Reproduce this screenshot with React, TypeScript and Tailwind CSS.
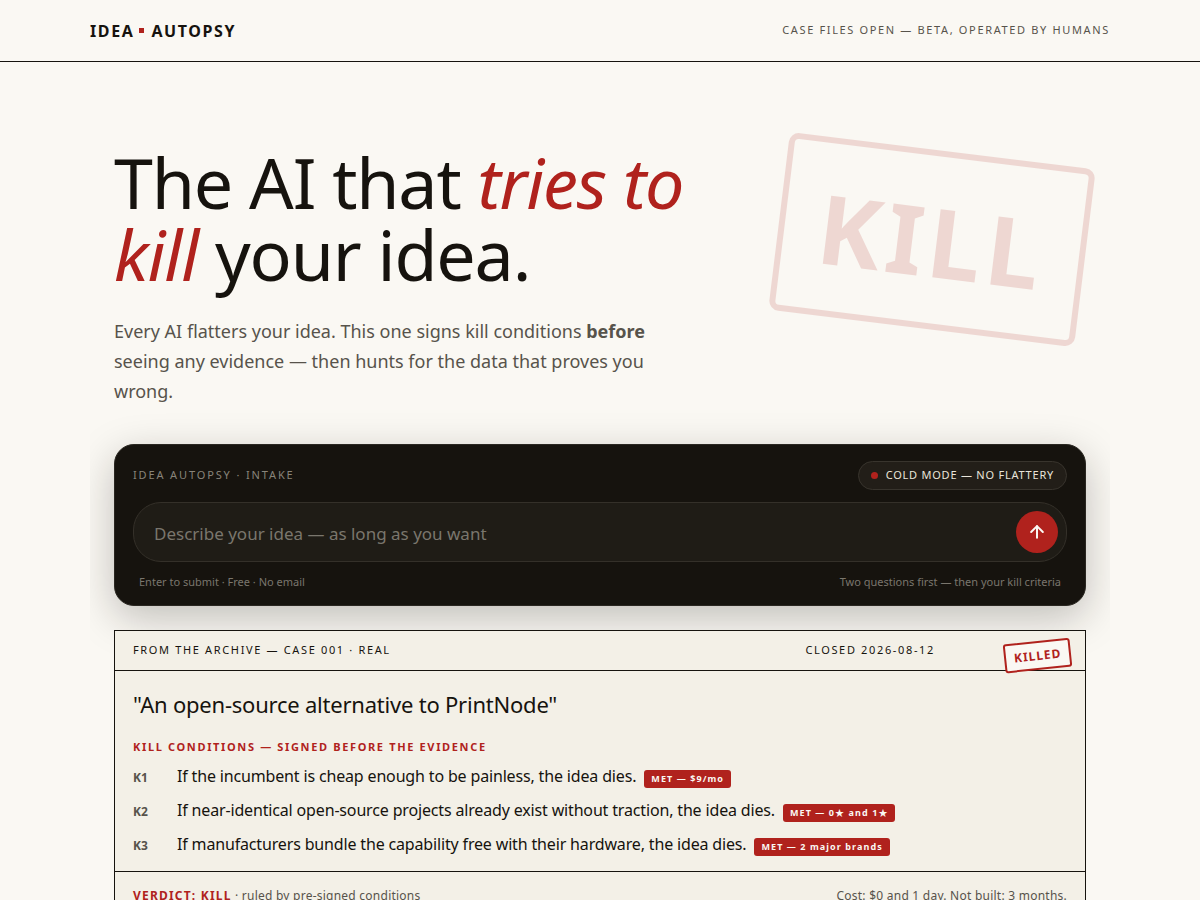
import { ArrowUp } from 'lucide-react'

interface Condition {
  id: string
  text: string
  met: string
}

const CONDITIONS: Condition[] = [
  { id: 'K1', text: 'If the incumbent is cheap enough to be painless, the idea dies.', met: 'MET — $9/mo' },
  { id: 'K2', text: 'If near-identical open-source projects already exist without traction, the idea dies.', met: 'MET — 0★ and 1★' },
  { id: 'K3', text: 'If manufacturers bundle the capability free with their hardware, the idea dies.', met: 'MET — 2 major brands' },
]

function Header() {
  return (
    <header className="border-b border-[#16130e]">
      <div className="mx-auto flex h-[61px] max-w-[1020px] items-center justify-between">
        <a href="#" className="flex items-center text-[16px] leading-5 font-bold tracking-[0.1em]">
          IDEA
          <span className="mr-[7px] ml-[5px] size-[5px] bg-[#b0221d]"></span>
          AUTOPSY
        </a>
        <span className="text-[11px] tracking-[0.15em] text-[#57534b]">CASE FILES OPEN — BETA, OPERATED BY HUMANS</span>
      </div>
    </header>
  )
}

function Intake() {
  return (
    <form
      onSubmit={(e) => e.preventDefault()}
      className="rounded-[20px] border border-[#2a2721] bg-[#16130e] px-[18px] pt-4 pb-[15px] shadow-[0_12px_40px_rgba(22,19,14,0.25)]"
    >
      <div className="flex items-center justify-between">
        <label htmlFor="idea" className="text-[11px] tracking-[0.17em] text-[#88847a]">IDEA AUTOPSY · INTAKE</label>
        <button type="button" className="flex h-[29px] items-center gap-2 rounded-full border border-[#38342d] bg-[#221e18] px-3 text-[11px] tracking-[0.07em] text-[#e9e5da]">
          <span className="size-[7px] rounded-full bg-[#b0221d]"></span>
          COLD MODE — NO FLATTERY
        </button>
      </div>

      <div className="mt-3 flex h-[60px] items-center rounded-[28px] border border-[#343029] bg-[#1f1c16] pr-2 pl-5">
        <input
          id="idea"
          type="text"
          placeholder="Describe your idea — as long as you want"
          className="min-w-0 flex-1 bg-transparent pt-1 text-[17px] text-[#f3f0e7] outline-none placeholder:text-[#7a766d]"
        />
        <button type="submit" aria-label="Submit idea" className="flex size-[42px] items-center justify-center rounded-full bg-[#b0221d] text-[#faf8f3]">
          <ArrowUp size={20} strokeWidth={2.4} />
        </button>
      </div>

      <div className="mt-3 flex justify-between px-1.5 text-[11px] leading-4 text-[#7a766d]">
        <span>Enter to submit · Free · No email</span>
        <span>Two questions first — then your kill criteria</span>
      </div>
    </form>
  )
}

function CaseFile() {
  return (
    <article className="relative mt-6 border border-[#16130e] bg-[#f3f0e7]">
      <div className="flex h-10 items-center justify-between border-b border-[#16130e] pr-[150px] pl-[18px] text-[11px] tracking-[0.15em]">
        <span>FROM THE ARCHIVE — CASE 001 · REAL</span>
        <span>CLOSED 2026-08-12</span>
      </div>
      <span className="absolute top-[10px] right-[14px] flex h-[29px] -rotate-6 items-center rounded-[3px] border-2 border-[#b0221d] bg-[#faf8f3] px-2 text-[12px] font-bold tracking-[0.08em] text-[#b0221d]">
        KILLED
      </span>

      <div className="px-[18px] pt-[17px] pb-[14px]">
        <h2 className="text-[22px] leading-8 tracking-[-0.01em]">"An open-source alternative to PrintNode"</h2>
        <h3 className="mt-[17px] text-[11px] leading-5 font-bold tracking-[0.15em] text-[#b0221d]">
          KILL CONDITIONS — SIGNED BEFORE THE EVIDENCE
        </h3>
        <ul className="mt-1.5 flex flex-col gap-2">
          {CONDITIONS.map((c) => (
            <li key={c.id} className="flex items-baseline">
              <span className="w-11 text-[12px] leading-4 font-bold text-[#57534b]">{c.id}</span>
              <span className="text-[16px] leading-[26px] tracking-[-0.01em]">
                {c.text}
                <span className="ml-2 inline-block rounded-[3px] bg-[#b0221d] px-[7px] py-0.5 text-[9px] leading-[14px] font-bold tracking-[0.12em] text-[#faf8f3]">
                  {c.met}
                </span>
              </span>
            </li>
          ))}
        </ul>
      </div>

      <footer className="flex justify-between border-t border-[#16130e] px-[18px] py-3 text-[12px] leading-6 tracking-[0.02em] text-[#57534b]">
        <span>
          <b className="tracking-[0.1em] text-[#b0221d]">VERDICT: KILL</b> · ruled by pre-signed conditions
        </span>
        <span>Cost: $0 and 1 day. Not built: 3 months.</span>
      </footer>
    </article>
  )
}

export default function App() {
  return (
    <div className="min-h-screen bg-[#faf8f3] font-['Noto_Sans','Noto_Sans_CJK_SC',sans-serif] text-[#16130e]">
      <Header />
      <main className="relative mx-auto max-w-[1020px] overflow-hidden px-6 pt-[84px] pb-16">
        {/* verdict stamp behind the headline */}
        <div
          aria-hidden="true"
          className="absolute top-[88px] right-6 rotate-7 rounded-[10px] border-6 border-[#b0221d] px-[34px] py-[18px] text-[96px] leading-[131px] font-bold tracking-[0.05em] text-[#b0221d] opacity-15"
        >
          KILL
        </div>

        <h1 className="relative max-w-[620px] text-[70px] leading-[72px] tracking-[-0.017em]">
          The AI that <em className="text-[#b0221d]">tries to kill</em> your idea.
        </h1>
        <p className="relative mt-[26px] mb-[38px] max-w-[560px] text-[18px] leading-[30px] text-[#57534b]">
          Every AI flatters your idea. This one signs kill conditions <strong>before</strong> seeing any evidence — then hunts for the data that proves you wrong.
        </p>

        <Intake />
        <CaseFile />
      </main>
    </div>
  )
}
